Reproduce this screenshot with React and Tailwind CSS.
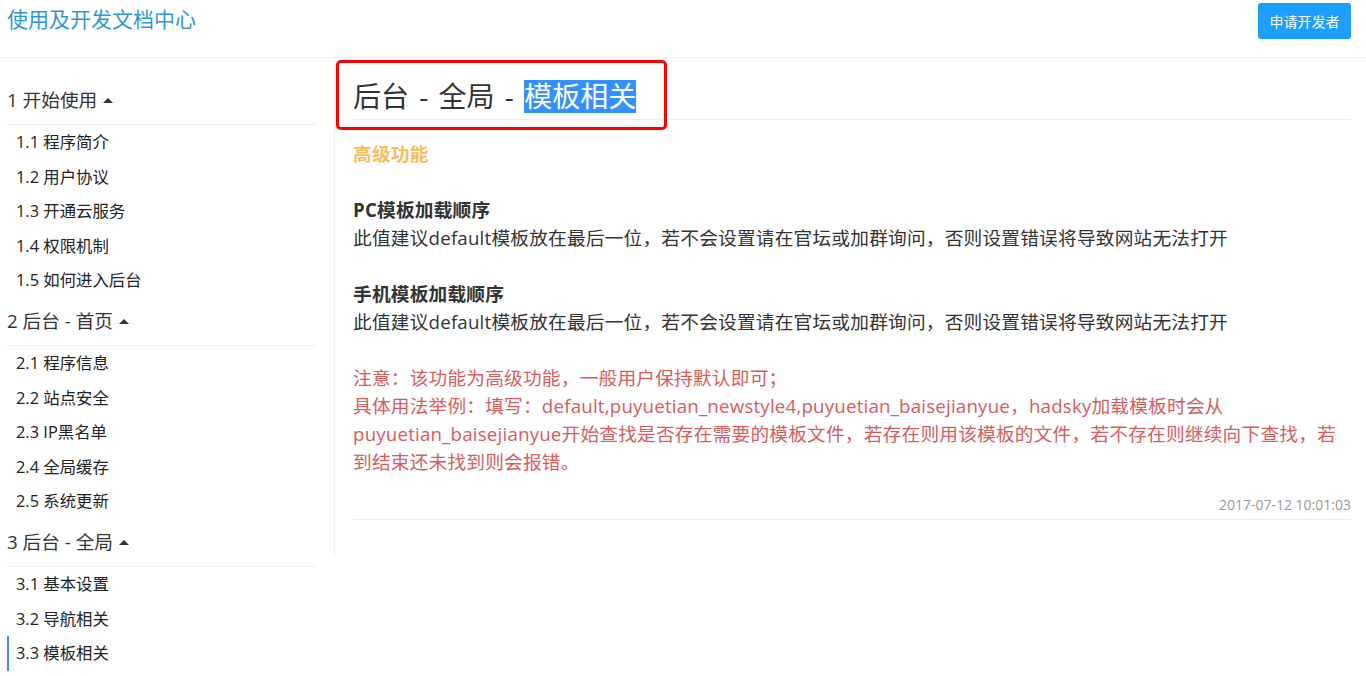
const menu = [
  {
    title: "1 开始使用",
    items: ["1.1 程序简介", "1.2 用户协议", "1.3 开通云服务", "1.4 权限机制", "1.5 如何进入后台"],
  },
  {
    title: "2 后台 - 首页",
    items: ["2.1 程序信息", "2.2 站点安全", "2.3 IP黑名单", "2.4 全局缓存", "2.5 系统更新"],
  },
  {
    title: "3 后台 - 全局",
    items: ["3.1 基本设置", "3.2 导航相关", "3.3 模板相关"],
  },
];

const active = "3.3 模板相关";

const App = () => {
  return (
    <div className="w-[1366px] h-[676px] overflow-hidden bg-white text-[#333] font-['Open_Sans','Noto_Sans_CJK_SC',sans-serif]">
      {/* Header */}
      <div className="h-[58px] border-b border-[#eee] flex items-start justify-between pl-[7px] pr-[15px] pt-[3px]">
        <p className="text-[21px] leading-[32px] text-[#2f96d8]">使用及开发文档中心</p>
        <button className="h-9 w-[93px] rounded-[3px] bg-[#1e9fff] text-white text-[14px]">申请开发者</button>
      </div>

      <div className="flex items-start">
        {/* Sidebar */}
        <div className="w-[334px] shrink-0 pl-[7px] pr-[18px] pt-[19px]">
          {menu.map((group) => (
            <div key={group.title}>
              <div className="h-[48px] border-b border-[#eee] flex items-center text-[18.7px] text-[#333]">
                <span>{group.title}</span>
                <span className="ml-[6px] inline-block w-0 h-0 border-x-[5px] border-x-transparent border-b-[5px] border-b-[#333]"></span>
              </div>
              {group.items.map((item) => (
                <div
                  key={item}
                  className={
                    item === active
                      ? "h-[34.6px] flex items-center border-l-2 border-[#3c8dff] pl-[7px] text-[16.4px] text-[#222]"
                      : "h-[34.6px] flex items-center border-l-2 border-transparent pl-[7px] text-[16.4px] text-[#222]"
                  }
                >
                  {item}
                </div>
              ))}
            </div>
          ))}
        </div>

        {/* Content */}
        <div className="relative flex-1 border-l border-[#eee] pl-[18px] pr-[15px] pb-[35px]">
          <h1 className="pt-[18px] pb-[3px] border-b border-[#eee] text-[28px] leading-[40px] font-normal text-[#333] [word-spacing:3px]">
            后台 - 全局 - <span className="inline-block leading-[33px] bg-[#3390ff] text-white">模板相关</span>
          </h1>

          <div className="pt-[20px] text-[18.7px] leading-[28px] tracking-[0.2px]">
            <p className="font-bold text-[#f9bd5c]">高级功能</p>
            <div className="h-[28px]"></div>
            <p className="font-bold text-[#333]">PC模板加载顺序</p>
            <p>此值建议default模板放在最后一位，若不会设置请在官坛或加群询问，否则设置错误将导致网站无法打开</p>
            <div className="h-[28px]"></div>
            <p className="font-bold text-[#333]">手机模板加载顺序</p>
            <p>此值建议default模板放在最后一位，若不会设置请在官坛或加群询问，否则设置错误将导致网站无法打开</p>
            <div className="h-[28px]"></div>
            <p className="text-[#d75c5c]">
              注意：该功能为高级功能，一般用户保持默认即可；
              <br />
              具体用法举例：填写：default,puyuetian_newstyle4,puyuetian_baisejianyue，hadsky加载模板时会从puyuetian_baisejianyue开始查找是否存在需要的模板文件，若存在则用该模板的文件，若不存在则继续向下查找，若到结束还未找到则会报错。
            </p>
          </div>

          <p className="mt-[19px] pb-[4px] border-b border-[#eee] text-right text-[14px] leading-[20px] text-[#999]">2017-07-12 10:01:03</p>

          {/* red annotation box */}
          <div className="absolute left-[1px] top-[2px] w-[331px] h-[70px] border-[3px] border-[#ff0000] rounded-[5px]"></div>
        </div>
      </div>
    </div>
  );
};

export default App;
